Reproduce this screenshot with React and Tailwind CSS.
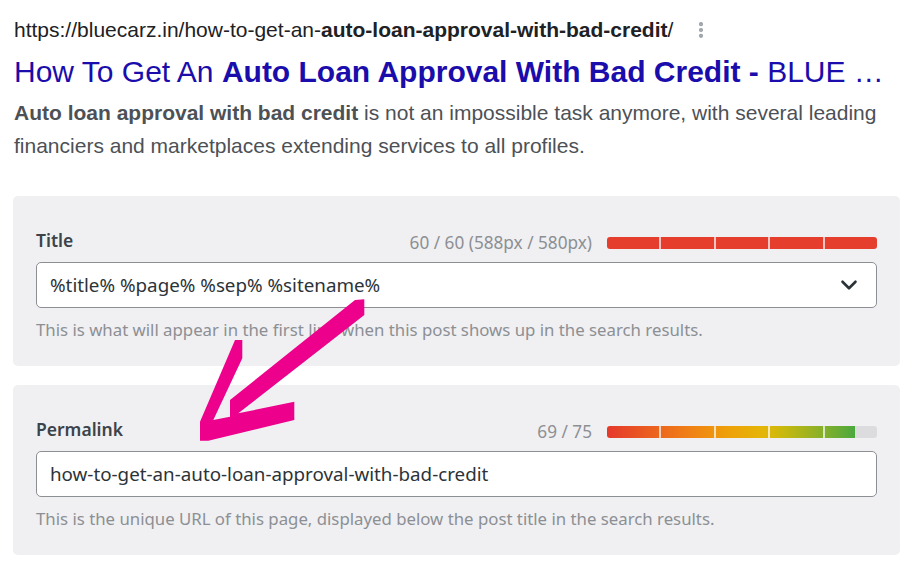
import { ChevronDown, EllipsisVertical } from "lucide-react";

const sans = "font-['Noto_Sans',sans-serif]";

function Bar({ fill, gradient }) {
  return (
    <div className="relative h-[12px] w-[270px] rounded-[3px] bg-[#dcdcde] overflow-hidden">
      <div
        className={
          gradient
            ? "h-full bg-[linear-gradient(90deg,#e5392b_0%,#f07f16_30%,#eea10a_45%,#e4b608_58%,#c9b90c_65%,#86b02a_80%,#4aa83e_92%,#3fa142_100%)] [background-size:270px_100%]"
            : "h-full bg-[#e53e2c]"
        }
        style={{ width: `${fill}%` }}
      />
      <div className="absolute inset-0 flex">
        <div className="flex-1 border-r-2 border-white/70" />
        <div className="flex-1 border-r-2 border-white/70" />
        <div className="flex-1 border-r-2 border-white/70" />
        <div className="flex-1 border-r-2 border-white/70" />
        <div className="flex-1" />
      </div>
    </div>
  );
}

function Field({ label, counter, fill, gradient, value, chevron, help }) {
  return (
    <div className={`rounded-[5px] bg-[#f0f0f2] px-[23px] pt-[35px] pb-[24px] ${sans}`}>
      <div className="flex h-[24px] items-center">
        <span className="-mt-[6px] text-[17.5px] font-semibold text-[#3c434a]">{label}</span>
        <span className="ml-auto mr-[15px] text-[17.2px] text-[#8c8f94]">{counter}</span>
        <Bar fill={fill} gradient={gradient} />
      </div>
      <div className="mt-[7px] flex h-[46px] items-center rounded-[5px] border border-[#8c8f94] bg-white pl-[13px] pr-[14px]">
        <span className="text-[18.8px] text-[#2c3338]">{value}</span>
        {chevron && <ChevronDown className="ml-auto text-[#2c3338]" size={26} strokeWidth={2.4} />}
      </div>
      <p className="mt-[10px] text-[16.8px] leading-[24px] text-[#8c8f94]">{help}</p>
    </div>
  );
}

export default function App() {
  return (
    <div className="relative h-[568px] w-[913px] overflow-hidden bg-white">
      <div className="pl-[14px] pt-[18px] font-['Liberation_Sans',Arial,sans-serif]">
        <div className="flex h-[24px] items-center text-[21px] text-[#202124]">
          <span>
            https://bluecarz.in/how-to-get-an-<b>auto-loan-approval-with-bad-credit</b>/
          </span>
          <EllipsisVertical className="ml-[18px] text-[#9aa0a6]" size={20} strokeWidth={3} />
        </div>
        <div className="mt-[12px] h-[36px] whitespace-nowrap text-[30px] leading-[36px] text-[#1a0dab]">
          How To Get An <b>Auto Loan Approval With Bad Credit -</b> BLUE …
        </div>
        <p className="mt-[6px] w-[890px] text-[21px] leading-[33px] text-[#4d5156]">
          <b>Auto loan approval with bad credit</b> is not an impossible task anymore, with several leading
          financiers and marketplaces extending services to all profiles.
        </p>
      </div>

      <div className="mt-[34px] flex w-[900px] flex-col gap-[19px] pl-[13px]">
        <Field
          label="Title"
          counter="60 / 60 (588px / 580px)"
          fill={100}
          value="%title% %page% %sep% %sitename%"
          chevron
          help="This is what will appear in the first line when this post shows up in the search results."
        />
        <Field
          label="Permalink"
          counter="69 / 75"
          fill={92}
          gradient
          value="how-to-get-an-auto-loan-approval-with-bad-credit"
          help="This is the unique URL of this page, displayed below the post title in the search results."
        />
      </div>

      <svg className="pointer-events-none absolute left-0 top-0" width="913" height="568" viewBox="0 0 913 568">
        <polygon
          fill="#ec008c"
          points="355,300 364.3,299.3 364.3,315 238.3,413.3 294.3,401.7 294.3,420 208.3,440.7 200,440.7 200,421.7 235,340 242.3,340 242.3,358.3 213.3,420 230,416.7 230,400"
        />
      </svg>
    </div>
  );
}
